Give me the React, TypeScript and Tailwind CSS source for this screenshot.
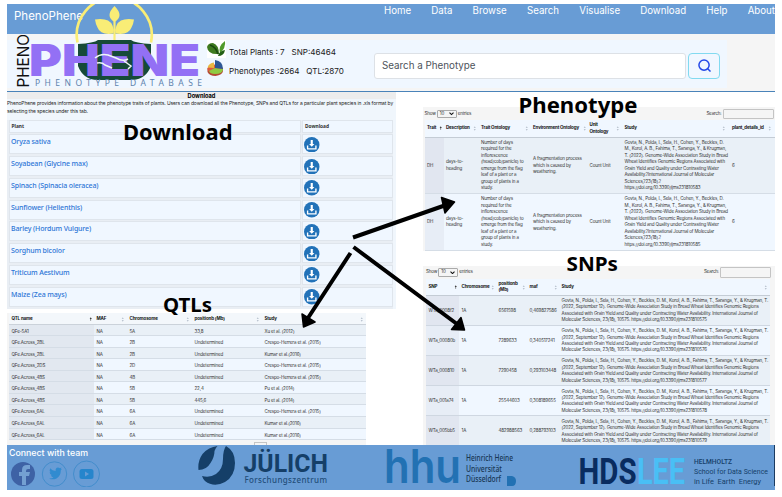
import React from 'react';

const NAV = ['Home', 'Data', 'Browse', 'Search', 'Visualise', 'Download', 'Help', 'About'];
const PLANTS = [
  'Oryza sativa',
  'Soyabean (Glycine max)',
  'Spinach (Spinacia oleracea)',
  'Sunflower (Helienthis)',
  'Barley (Hordum Vulgure)',
  'Sorghum bicolor',
  'Triticum Aestivum',
  'Maize (Zea mays)',
];
const QTLS = [
  ['QFe-5A1', '5A', '33,8', 'Xu et al. (2012)'],
  ['QFe.Across_2BL', '2B', 'Undetermined', 'Crespo-Herrera et al. (2015)'],
  ['QFe.Across_2BL', '2B', 'Undetermined', 'Kumar et al.(2016)'],
  ['QFe.Across_2DS', '2D', 'Undetermined', 'Crespo-Herrera et al. (2015)'],
  ['QFe.Across_4BS', '4B', 'Undetermined', 'Crespo-Herrera et al. (2015)'],
  ['QFe.Across_4BS', '5B', '22,4', 'Pu et al. (2014)'],
  ['QFe.Across_4BS', '5B', '445,6', 'Pu et al. (2014)'],
  ['QFe.Across_6AL', '6A', 'Undetermined', 'Crespo-Herrera et al. (2015)'],
  ['QFe.Across_6AL', '6A', 'Undetermined', 'Kumar et al.(2016)'],
  ['QFe.Across_6AL', '6A', 'Undetermined', 'Kumar et al.(2016)'],
];
const SNPS = [
  ['WTa_0008f2', '6561598', '0,469827586', '575'],
  ['WTa_00080b', '7289633', '0,340517241', '576'],
  ['WTa_000810', '7290458', '0,293103448', '577'],
  ['WTa_001a74', '25544603', '0,308189655', '578'],
  ['WTa_005bb5', '482988563', '0,288793103', '579'],
];

function Sort({ up = false }: { up?: boolean }) {
  return (
    <svg viewBox="0 0 4 6" className="h-[5px] w-[3.5px] shrink-0">
      <path d="M2 .3 3.3 2.5H.7z" fill={up ? '#333' : '#b9c3cf'} />
      <path d={up ? 'M1.6 2.5h.8v2h-.8z' : 'M2 5.7 3.3 3.5H.7z'} fill={up ? '#555' : '#b9c3cf'} />
    </svg>
  );
}

function Head({ label, up, className = '' }: { label: React.ReactNode; up?: boolean; className?: string }) {
  return (
    <div className={`flex items-center justify-between pt-[1px] font-bold ${className}`}>
      <span className="whitespace-nowrap">{label}</span>
      <Sort up={up} />
    </div>
  );
}

function Controls({ className = '' }: { className?: string }) {
  return (
    <div className={`flex items-center text-[4.500px] text-[#333] ${className}`}>
      <span>Show</span>
      <span className="ml-[1px] flex h-[8.500px] w-[20px] items-center justify-between rounded-[1px] border border-[#aaa] pl-[2px] pr-[2px]">
        10
        <svg viewBox="0 0 6 4" className="h-[3.500px] w-[5px]"><path d="M.6.6 3 3 5.4.6" fill="none" stroke="#111" strokeWidth="1.3" /></svg>
      </span>
      <span className="ml-[1px]">entries</span>
      <span className="ml-auto">Search:</span>
      <span className="ml-[1px] h-[10.500px] w-[51px] rounded-[1px] border border-[#c4c4c4]" />
    </div>
  );
}

function DownloadIcon() {
  return (
    <svg viewBox="0 0 16 16" className="h-[15.500px] w-[15.500px]">
      <circle cx="8" cy="8" r="8" fill="#2272b8" />
      <path d="M6.900 3h2.200v4.200h1.700L8 10 5.200 7.200h1.700z" fill="#fff" />
      <path d="M3.700 8.800v3.400h8.600V8.800" fill="none" stroke="#fff" strokeWidth="1.400" />
    </svg>
  );
}

function Logo() {
  return (
    <svg viewBox="8 4 196 86" className="absolute left-[1px] top-0 h-[86px] w-[196px]">
      <path d="M78 44Q94 43 98 40h33q4 3 20 4v22q-5 13-18 14H96Q83 79 78 66z" fill="#164a38" />
      <path d="M77.500 42.500A37.500 37.500 0 1 1 151 42.500" fill="none" stroke="#f9ed76" strokeWidth="2.700" />
      <path d="M114.500 6q-5 5-5 9 0 4 5 7 5-3 5-7 0-4-5-9zM95 19.500q14-2 17.500 6 2 4 1 8-13 2-16-6-2-4-2.500-8zM134 19.500q-14-2-17.500 6-2 4-1 8 13 2 16-6 2-4 2.500-8z" fill="#f9ed76" />
      <path d="M114.500 21v19" stroke="#f9ed76" strokeWidth="2.200" />
      <text x="29" y="75.500" textLength="171" lengthAdjust="spacingAndGlyphs" fontFamily="Inter" fontWeight="900" fontSize="43.500" fill="#9370f5">PHENE</text>
      <path d="M95 58q6-5 13-3l8 3q7 4 12 1M97 63q5-1 8 2l7 3M124 61l7 5-3 3" fill="none" stroke="#eef7f6" strokeWidth="1.500" />
      <text transform="translate(28.500 87.500) rotate(-90)" textLength="53.500" lengthAdjust="spacingAndGlyphs" fontFamily="Inter" fontSize="16.500" fill="#111">PHENO</text>
      <text x="35" y="86.300" textLength="167" fontFamily="Noto Sans" fontSize="8.500" fill="#5f83ad">PHENOTYPE DATABASE</text>
    </svg>
  );
}

function PlantIcon() {
  return (
    <svg viewBox="0 0 19 18" className="h-[18px] w-[19px] bg-white">
      <path d="M0 7Q1 3 6 3q6 2 6 11Q1 15 0 7z" fill="#3f7a1e" />
      <path d="M3 5q6 2 8 9" stroke="#1d4a10" fill="none" strokeWidth="1.800" />
      <path d="M18 1q1 7-5 12-2-7 5-12z" fill="#4f9a2a" />
      <path d="M18 10q-1 6-7 6 1-5 7-6z" fill="#225f14" />
    </svg>
  );
}

function PieIcon() {
  return (
    <svg viewBox="0 0 17 17" className="h-[17px] w-[17px]">
      <path d="M.5 8v4q2 4 8 4 7-1 7.500-5V8z" fill="#b34a34" />
      <ellipse cx="8.200" cy="9" rx="7.700" ry="4.500" fill="#dd5a3e" />
      <path d="M8 8l8 1q0 5-8 5-5 0-6-3z" fill="#8fcb42" />
      <path d="M7 8V2.500Q2 3 .5 7.500z" fill="#e9b843" />
      <path d="M8 8V0q8 1 8 9z" fill="#2d5795" />
    </svg>
  );
}

const CITE_P = ['Govta, N., Polda, I., Sela, H., Cohen, Y., Beckles, D.', 'M., Korol, A. B., Fahima, T., Saranga, Y., & Krugman,', 'T. (2022). Genome-Wide Association Study in Bread', 'Wheat Identifies Genomic Regions Associated with', 'Grain Yield and Quality under Contrasting Water', 'Availability.?International Journal of Molecular', 'Sciences,?23(18).?'];
const ONTO = ['Number of days', 'required for the', 'inflorescence', '(head/cob/panicle) to', 'emerge from the flag', 'leaf of a plant or a', 'group of plants in a', 'study.'];
const CITE_S = ['Govta, N., Polda, I., Sela, H., Cohen, Y., Beckles, D. M., Korol, A. B., Fahima, T., Saranga, Y., & Krugman, T.', '(2022, September 12). Genome-Wide Association Study in Bread Wheat Identifies Genomic Regions', 'Associated with Grain Yield and Quality under Contracting Water Availability. International Journal of'];

function Lines({ items }: { items: string[] }) {
  return <div className="whitespace-nowrap">{items.map((t) => <div key={t}>{t}</div>)}</div>;
}

function DownloadPanel() {
  return (
    <section className="h-[217.500px] w-[389px] bg-[#f0f6fc]">
      <h2 className="h-[7px] bg-[#ededed] text-center text-[5.700px] font-bold leading-[8px]">Download</h2>
      <div className="h-[21.500px] whitespace-nowrap text-[4.900px] leading-[8.300px] tracking-[-0.070px] text-[#222]">
        <div>PhenoPhene provides information about the phenotype traits of plants. Users can download all the Phenotype, SNPs and QTLs for a particular plant species in .xls format by</div>
        <div>selecting the species under this tab.</div>
      </div>
      <div className="flex h-[189px] w-[386px] flex-col gap-[1.750px] bg-[#e9eef4] px-[1.500px] font-['Noto_Sans']">
        <div className="grid h-[12.500px] grid-cols-[292px_91px] gap-[1.500px] text-[4.800px] font-bold leading-[12px] text-[#333]">
          <div className="border border-[#dfe5ec] bg-[#f0f7ff] pl-[2px] leading-[11px]">Plant</div>
          <div className="border border-[#dfe5ec] bg-[#f0f7ff] pl-[2px] leading-[11px]">Download</div>
        </div>
        {PLANTS.map((p) => (
          <div key={p} className="grid h-[20px] grid-cols-[292px_91px] gap-[1.500px]">
            <div className="border border-[#dfe5ec] bg-[#f0f7ff] pl-[1.500px] pt-[1px] text-[7px] font-medium leading-[11px] tracking-[-0.120px] text-[#2c75d6]">{p}</div>
            <div className="border border-[#dfe5ec] bg-[#f0f7ff] pl-[1px] pt-[1.500px]"><DownloadIcon /></div>
          </div>
        ))}
      </div>
    </section>
  );
}

function QtlPanel() {
  return (
    <section className="mt-[3.500px] h-[132px] w-[359px] overflow-hidden bg-[#f5f5f5] pl-[2px] text-[4.500px] tracking-[-0.130px] text-[#333]">
      <div className="grid h-[12px] grid-cols-[85px_33px_65px_70px_104px] items-center border-b border-[#cbd2da] bg-[#f3f7fb] pt-[1px] text-[#111]">
        <Head label="QTL name" up className="pl-[2.500px] pr-[2px]" />
        <Head label="MAF" className="pl-[2.500px] pr-[3px]" />
        <Head label="Chromosome" className="pl-[2.500px] pr-[3px]" />
        <Head label="positionb (Mb)" className="pl-[2.500px] pr-[3px]" />
        <Head label="Study" className="pl-[2.500px] pr-[3px]" />
      </div>
      {QTLS.map((r, i) => (
        <div key={i} className={`grid h-[11.570px] grid-cols-[85px_33px_65px_70px_104px] border-b border-[#d5dde6] leading-[13px] ${i % 2 ? 'bg-[#f0f7ff]' : 'bg-[#e9f0f7]'}`}>
          <div className="h-[10.570px] bg-[#e2e8f0] pl-[2.500px]">{r[0]}</div>
          <div className="h-[10.570px] pl-[2.500px]">NA</div>
          <div className="h-[10.570px] pl-[2.500px]">{r[1]}</div>
          <div className="h-[10.570px] pl-[2.500px]">{r[2]}</div>
          <div className="h-[10.570px] pl-[2.500px]">{r[3]}</div>
        </div>
      ))}
      <div className="ml-[245px] mt-[1.500px] h-[5px] w-[12.500px] border border-[#c5c5c5]" />
    </section>
  );
}

function PhenotypePanel() {
  const cols = 'grid grid-cols-[19px_35px_52px_56.500px_35px_107.500px_44px]';
  return (
    <section className="mt-[15.500px] h-[144px] w-[352px] bg-[#f5f5f5] pl-[1.500px] text-[4.500px] leading-[6.500px] tracking-[-0.160px] text-[#333]">
      <Controls className="h-[12.500px] pr-[1.500px] pt-[1px]" />
      <div className={`${cols} h-[18px] items-center border-b border-[#c4ccd5] bg-[#f0f7ff] text-[#111]`}>
        <Head label="Trait" up className="pl-[2.500px] pr-[1px]" />
        <Head label="Description" className="pl-[2.500px] pr-[2px]" />
        <Head label="Trait Ontology" className="pl-[2.500px] pr-[2px]" />
        <Head label="Environment Ontology" className="pl-[2.500px] pr-[1px]" />
        <Head label={<>Unit<br />Ontology</>} className="pl-[2.500px] pr-[3px]" />
        <Head label="Study" className="pl-[2.500px] pr-[4px]" />
        <Head label="plant_details_id" className="pl-[2.500px] pr-[2px]" />
      </div>
      {['10583', '10585'].map((n, i) => (
        <div key={n} className={`${cols} h-[56.500px] items-center border-b border-[#d5dde6] ${i ? 'bg-[#f0f7ff]' : 'bg-[#e9f0f7]'}`}>
          <div className={`flex h-full items-center pl-[2.500px] pt-[1px] ${i ? 'bg-[#e7edf6]' : 'bg-[#e1e6f0]'}`}>DH</div>
          <div className="pl-[2.500px] pt-[1px]">days-to-<br />heading</div>
          <div className="pl-[2.500px] pt-[1px]"><Lines items={ONTO} /></div>
          <div className="pl-[2.500px] pt-[1px]"><Lines items={['A fragmentation process', 'which is caused by', 'weathering.']} /></div>
          <div className="pl-[2.500px] pt-[1px]">Count Unit</div>
          <div className="pl-[2.500px] pt-[1px]"><Lines items={[...CITE_P, `https://doi.org/10.3390/ijms2318${n}`]} /></div>
          <div className="pl-[2.500px] pt-[1px]">6</div>
        </div>
      ))}
    </section>
  );
}

function SnpPanel() {
  const cols = 'grid grid-cols-[33px_37px_31px_32px_211px]';
  return (
    <section className="mt-[15px] h-[179px] w-[352px] overflow-hidden bg-[#f5f5f5] pl-[3px] text-[4.500px] leading-[6.400px] tracking-[-0.160px] text-[#333]">
      <Controls className="h-[12.500px] pr-[4px]" />
      <div className={`${cols} h-[17px] w-[344px] items-center border-b border-[#c4ccd5] bg-[#f0f7ff] text-[#111]`}>
        <Head label="SNP" up className="pl-[2.500px] pr-[2px]" />
        <Head label="Chromosome" className="pl-[2.500px] pr-[2px]" />
        <Head label={<>positionb<br />(Mb)</>} className="pl-[2.500px] pr-[2px]" />
        <Head label="maf" className="pl-[2.500px] pr-[2px]" />
        <Head label="Study" className="pl-[2.500px] pr-[3px]" />
      </div>
      {SNPS.map((r, i) => (
        <div key={r[0]} className={`${cols} h-[30.200px] w-[344px] items-center border-b border-[#cfd7e1] ${i % 2 ? 'bg-[#f0f7ff]' : 'bg-[#e9f0f7]'}`}>
          <div className={`flex h-full items-center pl-[2.500px] pt-[1.500px] ${i % 2 ? 'bg-[#e7edf6]' : 'bg-[#e1e6f0]'}`}>{r[0]}</div>
          <div className="pl-[2.500px] pt-[1.500px]">1A</div>
          <div className="pl-[2.500px] pt-[1.500px]">{r[1]}</div>
          <div className="pl-[2.500px] pt-[1.500px]">{r[2]}</div>
          <div className="pl-[2.500px] pt-[1.500px]"><Lines items={[...CITE_S, `Molecular Sciences, 23(18), 10575. https://doi.org/10.3390/ijms231810${r[3]}`]} /></div>
        </div>
      ))}
    </section>
  );
}

function Footer() {
  return (
    <footer className="flex h-[45px] w-[768px] bg-[#689cd5]">
      <div className="w-[191px] pl-[2px] pt-[2px] text-white">
        <div className="text-[8.800px] font-medium leading-[12px]">Connect with team</div>
        <svg viewBox="0 0 94 28" className="h-[28px] w-[94px]">
          <circle cx="14" cy="15" r="12" fill="#3e62a5" />
          <path d="M13 26V17h-3v-4h3v-2q0-5 5-5h3v4h-2q-2 0-2 2v1h4l-1 4h-3v9z" fill="#74a0d2" />
          <circle cx="45.500" cy="15" r="12.200" fill="none" stroke="#438dcc" />
          <path d="M40 19.500q3 .2 4.500-1-2-.5-2.700-2.200l1.200-.1q-2.500-1-2.300-3.200l1.200.3q-2-1.500-.8-4 2.200 2.500 5.500 2.700-.3-3.300 2.400-3.500 1 0 1.900.8l1.600-.7-.9 1.600 1.400-.4-1.200 1.500q0 6-4.300 8.200-4 1.700-7.500 0z" fill="#318bd0" />
          <circle cx="77.500" cy="15" r="13" fill="none" stroke="#438dcc" />
          <rect x="70.500" y="10" width="14" height="10" rx="2.500" fill="#2685cc" />
          <path d="m76 12.500 4 2.500-4 2.500z" fill="#689cd5" />
        </svg>
      </div>
      <svg viewBox="198 445 140 45" className="h-[45px] w-[140px]">
        <path d="M217.500 446q-9 1-15 8-5 7-4 16 8 0 12-7 4-6 4-12 1-3 3-5z" fill="#153f68" />
        <path d="M226 446q9 5 9 17 0 13-10 19-11 6-20-1-2-2-3-5 8 2 14-2 7-5 7-15 0-9 3-13z" fill="#153f68" />
        <text x="243.500" y="471.500" textLength="84.500" lengthAdjust="spacingAndGlyphs" fontFamily="Roboto" fontWeight="700" fontSize="26.500" fill="#153f68">JÜLICH</text>
        <text x="244.500" y="483" textLength="82.500" fontFamily="Noto Sans" fontWeight="500" fontSize="8" fill="#234e7a">Forschungszentrum</text>
      </svg>
      <svg viewBox="338 445 240 45" className="h-[45px] w-[240px]">
        <text x="384" y="482.500" textLength="77" lengthAdjust="spacingAndGlyphs" fontFamily="Inter" fontWeight="600" fontSize="47" fill="#2271b3">hhu</text>
        <g fontFamily="Noto Sans" fontSize="8" fontWeight="500" fill="#173653">
          <text x="466" y="461" textLength="47" lengthAdjust="spacingAndGlyphs">Heinrich Heine</text>
          <text x="466" y="471.500" textLength="36" lengthAdjust="spacingAndGlyphs">Universität</text>
          <text x="466" y="482" textLength="35" lengthAdjust="spacingAndGlyphs">Düsseldorf</text>
        </g>
        <path d="M507 476h5q4 1 4 5 0 5-4 5h-5z" fill="#2271b3" />
      </svg>
      <svg viewBox="578 445 197 45" className="h-[45px] w-[197px]">
        <text x="578.500" y="483.700" textLength="58" lengthAdjust="spacingAndGlyphs" fontFamily="Roboto" fontWeight="700" fontSize="36" fill="#092c60">HDS</text>
        <text x="637" y="483.700" textLength="48" lengthAdjust="spacingAndGlyphs" fontFamily="Roboto" fontWeight="700" fontSize="36" fill="#49bff5">LEE</text>
        <g fontFamily="Roboto" fontSize="8" fill="#153f6a">
          <text x="694" y="463.500" textLength="38" lengthAdjust="spacingAndGlyphs" fontWeight="500">HELMHOLTZ</text>
          <text x="694" y="473.500" textLength="74" lengthAdjust="spacingAndGlyphs">School for Data Science</text>
          <text x="694" y="484" textLength="67" lengthAdjust="spacingAndGlyphs" xmlSpace="preserve">in Life  Earth  Energy</text>
        </g>
        <path d="M774 445h1v41h-1z" fill="#1c3c61" />
      </svg>
    </footer>
  );
}

function Callouts() {
  return (
    <svg viewBox="0 0 782 497" className="pointer-events-none absolute left-0 top-0 h-[497px] w-[782px]">
      <g stroke="#000" strokeWidth="4">
        <path d="M353 237.500 446 205M353.500 247 457 324M350.500 253 308 318" />
      </g>
      <g stroke="#000" strokeWidth="1.500" strokeLinejoin="round">
        <path d="M441.500 197.500 454.500 202 445 213zM461 317.500 464.500 330 451.500 329.500zM302 314 315 322 303.500 327z" />
      </g>
      <g fontFamily="Noto Sans" fontWeight="700">
        <text x="123" y="140" fontSize="22" textLength="109.500" lengthAdjust="spacingAndGlyphs">Download</text>
        <text x="163" y="311.700" fontSize="19" textLength="49" lengthAdjust="spacingAndGlyphs">QTLs</text>
        <text x="518.500" y="113" fontSize="22" textLength="119" lengthAdjust="spacingAndGlyphs">Phenotype</text>
        <text x="566.500" y="271" fontSize="19" textLength="51.500" lengthAdjust="spacingAndGlyphs">SNPs</text>
      </g>
    </svg>
  );
}

export default function App() {
  return (
    <div className="relative h-[497px] w-[782px] overflow-hidden bg-white pl-[7px] pt-1 font-['Inter',sans-serif]">
      <div className="relative w-[768px]">
        <header className="flex h-[29.500px] bg-[#689cd5] text-white">
          <div className="pl-[7px] pt-[4px] text-[11.500px] leading-[16px]">PhenoPhene</div>
          <nav className="ml-auto flex gap-[20.200px] text-[9.700px] leading-[14px]">
            {NAV.map((n) => <a key={n}>{n}</a>)}
          </nav>
        </header>
        <div className="h-[58px] border-b border-[#4a83b9] bg-[#f5f5f5] pt-[6px]">
          <div className="flex h-[48px] w-[720px] bg-[#f0f7ff] pl-[200px]">
            <div className="flex w-[167px] flex-col gap-[2px] text-[8.100px] text-[#222]">
              <div className="flex h-[18px] items-center whitespace-pre"><PlantIcon /><span className="pl-[3px] pt-[8px]">Total Plants : 7   SNP:46464</span></div>
              <div className="flex h-[18px] items-center whitespace-pre"><PieIcon /><span className="pl-[5px] pt-[5px]">Phenotypes :2664   QTL:2870</span></div>
            </div>
            <div className="mt-[13px] flex h-[26px] w-[312px] items-center rounded-[3px] border border-[#dde1e6] bg-white pl-[7px] pt-[2px] text-[9.800px] text-[#4d535a]">Search a Phenotype</div>
            <div className="ml-[2px] mt-[13px] flex h-[26px] w-[32px] items-center justify-center rounded-[4px] border border-[#82daf0]">
              <svg viewBox="0 0 14 14" className="h-[13px] w-[13px]" fill="none" stroke="#2348e8" strokeWidth="1.600"><circle cx="6.500" cy="6.500" r="5.500" /><path d="m10.500 10.500 3 3" /></svg>
            </div>
          </div>
        </div>
        <Logo />
      </div>
      <main className="flex h-[353.500px] w-[768px]">
        <div className="w-[416px]"><DownloadPanel /><QtlPanel /></div>
        <div className="w-[352px]"><PhenotypePanel /><SnpPanel /></div>
      </main>
      <Footer />
      <Callouts />
    </div>
  );
}
